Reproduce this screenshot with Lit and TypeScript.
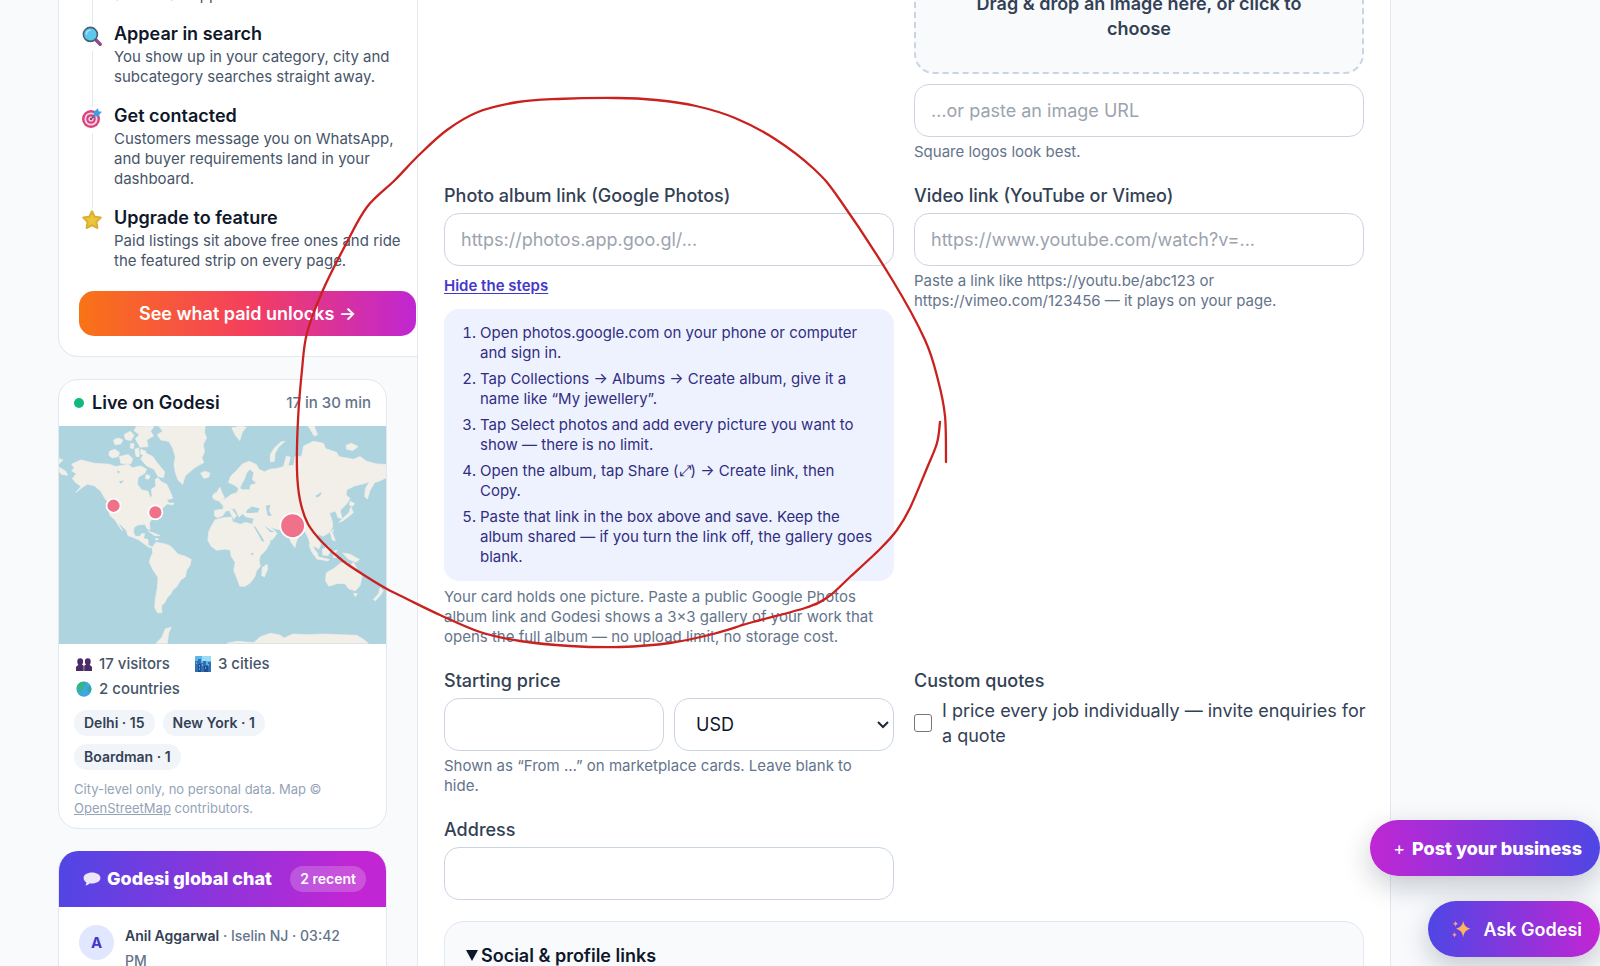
import { LitElement, html, css, svg } from "lit";
import { customElement } from "lit/decorators.js";

/* ---------- icons ---------- */

const searchIcon = html`<svg class="step-icon" viewBox="0 0 20 20" aria-hidden="true">
  <path d="M13 13l5.2 5.2" stroke="#8e4b8c" stroke-width="3.4" stroke-linecap="round" />
  <circle cx="8.4" cy="8.4" r="7" fill="#5cc8ee" stroke="#4a6076" stroke-width="1.6" />
  <path d="M4.4 8a4 4 0 0 1 3.6-3.8" stroke="#a5e4fb" stroke-width="1.4" fill="none" stroke-linecap="round" />
</svg>`;

const targetIcon = html`<svg class="step-icon" viewBox="0 0 20 20" aria-hidden="true">
  <circle cx="9" cy="11" r="9" fill="#d8437c" />
  <circle cx="9" cy="11" r="6.6" fill="#fbd3e2" />
  <circle cx="9" cy="11" r="4.8" fill="#d8437c" />
  <circle cx="9" cy="11" r="2.6" fill="#fbd3e2" />
  <circle cx="9" cy="11" r="1.2" fill="#8f3a78" />
  <path d="M9 11l6-6" stroke="#6b4f9c" stroke-width="1.2" />
  <path d="M11.600 8.400V4L16 .2l.6 3 3.200.6L16 8.400z" fill="#3f9fe0" />
</svg>`;

const starIcon = html`<svg class="step-icon" viewBox="0 0 20 20" aria-hidden="true">
  <path d="M10 1.200l2.700 5.500 6.100.9-4.400 4.300 1 6.100L10 15.100 4.600 18l1-6.100L1.200 7.600l6.100-.9z"
    fill="#ecc63a" stroke="#dcae33" stroke-width="2" stroke-linejoin="round" />
</svg>`;

const peopleIcon = html`<svg class="stat-icon" viewBox="0 0 16 16" aria-hidden="true">
  <g fill="#4b2a68">
    <path d="M1.300 5.500a2.900 3.300 0 0 1 5.800 0c0 1.500-.5 2.500-1.100 3.100l1.700 1.200V15H0v-3.400c0-1 1-1.700 2.500-2.500-.7-.8-1.200-2.100-1.200-3.600z" />
    <path d="M8.900 5.500a2.900 3.300 0 0 1 5.800 0c0 1.500-.5 2.800-1.200 3.600 1.500.8 2.500 1.500 2.500 2.500V15H8.200V9.800l1.800-1.200c-.6-.6-1.100-1.600-1.100-3.100z" />
  </g>
</svg>`;

const cityIcon = html`<svg class="stat-icon" viewBox="0 0 16 16" aria-hidden="true">
  <rect width="16" height="16" rx="1" fill="#58b8ea" />
  <rect x="7" width="9" height="5" fill="#9bdcf5" />
  <path d="M0 5h3V3h3v4h2V5h3v4h2V6h3v10H0z" fill="#2f6fb5" />
  <path d="M3 8h3v8H3zM9 10h4v6H9z" fill="#1f4f92" />
  <path d="M1 7h1M7 9h1M10 12h1M4 10h1M13 9h1M4 13h1" stroke="#bfe8fb" />
</svg>`;

const globeIcon = html`<svg class="stat-icon" viewBox="0 0 16 16" aria-hidden="true">
  <circle cx="8" cy="8" r="7.600" fill="#3fa7e8" />
  <path d="M3 2.300C6 .2 9 .5 10 2c.8 1.500-1 2.200-2 3.500S8 8 6.500 8.500 6 11 5 12 2 10 1 8s.4-4.500 2-5.700z" fill="#37b48a" />
  <path d="M11 6l3.500-1c1.200 2 1.200 5-1 7-1.500.4-1.300-2-2.200-3z" fill="#35a9a0" />
  <path d="M1 11c2 4 8 6 12.500 2.300C11 16 4 17 1 11z" fill="#2b6cc4" />
</svg>`;

const bubbleIcon = html`<svg class="bubble" viewBox="0 0 18 14" aria-hidden="true">
  <path d="M9 .6c4.700 0 8.400 2.300 8.400 5.500S13.700 11.600 9 11.600c-.9 0-1.700-.1-2.500-.2C5.500 12.600 4 13.400 2.400 13.400c.7-.8 1-1.800.9-2.900C1.700 9.400.6 7.900.6 6.100.6 2.900 4.300.6 9 .6z" fill="#ece4f8" />
</svg>`;

const sparkleIcon = html`<svg class="sparkle" viewBox="0 0 20 20" aria-hidden="true">
  <g fill="#fdb45c">
    <path d="M12.200 2c1 4.400 2.600 6.400 7.300 7.800-4.700 1.400-6.300 3.400-7.300 8.400-1-5-2.600-7-7.300-8.400C9.600 8.400 11.200 6.400 12.200 2z" />
    <path d="M4.500 1.800c.4 1.800 1 2.500 2.700 3-1.700.5-2.300 1.200-2.700 3-.4-1.800-1-2.500-2.700-3 1.700-.5 2.300-1.200 2.700-3z" fill="#f79a8d" />
    <path d="M3.500 13c.4 1.700.9 2.300 2.500 2.800-1.600.5-2.100 1.100-2.500 2.800-.4-1.700-.9-2.300-2.500-2.800 1.600-.5 2.100-1.100 2.500-2.800z" fill="#f79a8d" />
  </g>
</svg>`;

/* ---------- world map ---------- */

const land = [
  // North America
  "M92 285L120 272L160 282L205 285L225 292L262 285L275 296L300 290L318 300L312 312L292 325L290 345L302 362L322 366L328 386L334 380L332 360L345 352L344 330L352 326L362 338L378 345L392 375L396 388L378 392L384 402L400 402L396 408L380 404L370 414L352 425L345 440L330 455L326 462L328 482L320 480L312 466L292 468L280 474L278 490L284 502L298 502L302 494L312 494L308 508L322 512L322 528L334 534L326 536L312 526L296 514L276 505L262 500L256 484L238 466L232 462L246 486L240 480L222 452L208 440L200 415L202 400L190 385L180 366L160 350L140 345L128 352L104 370L120 352L104 340L94 328L106 314L92 305L100 296Z",
  // Arctic islands
  "M206 246L222 240L236 250L232 262L214 266L204 258Z", "M218 212L232 206L246 212L240 224L222 226Z",
  "M236 262L262 256L276 268L270 284L240 282Z", "M250 196L268 186L280 198L270 214L254 210Z",
  "M286 172L340 170L330 186L338 200L318 212L322 232L298 234L284 208L296 196L280 184Z",
  "M282 240L294 236L296 262L286 262Z", "M312 250L336 262L352 284L372 308L368 326L352 322L340 300L318 290L300 270Z",
  "M270 222L280 224L278 238L268 236Z", "M300 240L316 246L310 258L300 254Z", "M316 316L328 320L324 330L314 328Z",
  "M54 268L66 272L54 284Z", "M54 294L74 306L80 318L62 316L54 306Z",
  // Greenland, Iceland, Svalbard
  "M354 170L494 170L492 190L498 206L488 226L492 246L484 266L490 280L468 292L452 304L434 320L426 346L412 332L404 310L400 286L404 262L396 236L384 216L360 212L350 196L366 186Z",
  "M480 312L494 306L508 312L504 324L490 328Z",
  "M574 176L600 170L618 174L606 188L598 214L586 200Z", "M804 170L822 170L832 196L822 200Z",
  // Caribbean
  "M322 486L344 494L358 500L342 500ZM344 508L354 510L346 514Z",
  // South America
  "M334 536L346 520L370 524L388 530L404 546L412 556L434 562L452 572L448 590L438 604L434 624L420 634L408 654L396 664L390 676L380 686L372 702L362 712L364 732L350 732L342 716L344 690L350 656L352 626L336 602L326 580L330 564L336 552Z",
  "M374 780L392 776L384 792L380 824L346 824L364 806Z",
  // Africa
  "M524 452L548 446L574 444L576 458L600 466L616 460L636 466L650 492L664 516L686 514L690 520L676 544L660 560L656 574L660 592L648 606L644 622L630 642L614 652L598 652L590 630L580 604L584 580L572 562L570 544L554 540L528 544L512 532L502 514L504 490L512 472Z",
  "M666 596L680 586L682 600L672 624L664 620Z",
  // Europe and Asia
  "M522 424L548 420L548 410L536 396L556 388L572 376L590 370L596 356L606 362L628 362L630 348L650 342L636 332L640 310L628 300L618 312L612 330L604 344L596 362L588 352L578 346L564 340L570 322L588 304L606 284L626 276L648 286L656 300L672 308L688 300L710 298L730 292L738 260L750 264L744 290L760 288L764 262L784 262L790 230L820 216L850 222L856 238L890 250L896 262L940 270L960 262L980 276L1010 284L1038 286L1038 326L1018 336L1004 340L990 364L982 390L974 382L976 358L988 338L970 344L944 350L920 362L918 378L930 388L920 404L900 424L906 448L894 446L886 426L868 432L876 456L878 472L866 492L848 502L836 496L828 506L842 524L836 540L816 528L812 514L822 540L834 556L824 556L812 536L806 512L796 490L786 484L778 498L768 518L764 536L752 520L744 496L730 484L708 480L690 474L704 486L710 494L696 512L672 520L660 506L644 480L636 466L640 448L618 444L606 434L596 444L584 420L572 418L588 440L580 450L566 424L556 426L546 440L530 446L522 440Z",
  "M522 392L526 374L538 354L544 370L552 386L538 396ZM516 380L524 370L526 382L518 390Z",
  "M690 278L690 256L702 236L722 218L734 216L716 232L704 252L702 276Z",
  "M918 228L934 222L954 232L938 244L920 240Z",
  // Japan, Indonesia, islands
  "M930 396L944 404L936 412L928 408ZM932 414L940 430L926 442L908 456L896 460L914 442L926 432Z",
  "M806 526L822 544L836 564L868 572L864 576L830 570L814 548Z", "M846 542L864 530L872 544L864 560L848 558Z",
  "M880 546L892 544L884 554L890 566L880 566Z", "M868 480L876 490L886 516L876 512Z",
  "M908 552L930 556L958 572L948 580L924 570Z", "M876 484L880 480L878 490Z",
  // Australia, New Zealand
  "M858 612L882 598L902 582L922 580L928 592L940 580L952 602L966 624L960 650L946 666L926 660L914 644L892 644L866 652L856 636Z",
  "M940 674L952 674L946 684ZM1020 656L1030 666L1022 678L1006 696L1000 692L1016 674Z",
  // Antarctica
  "M560 824L590 818L640 822L660 804L690 794L716 798L732 808L758 796L800 798L850 796L900 798L950 800L970 812L985 824Z",
].map((d) => svg`<path d=${d} />`);

const water = [
  "M618 424L634 412L658 418L652 430L630 432L618 432Z",
  "M676 410L690 408L686 424L694 440L682 440Z",
  "M640 472L646 474L672 516L666 518ZM672 470L692 484L704 488L690 490Z",
  "M826 380L846 368L840 380L830 386Z", "M228 304L238 308L232 314ZM234 336L250 334L240 344Z", "M630 552L640 552L636 560Z",
].map((d) => svg`<path d=${d} />`);

const visitors = [
  { x: 218, y: 410, r: 21 },
  { x: 344, y: 430, r: 21 },
  { x: 757, y: 470, r: 37 },
].map((p) => svg`<circle cx=${p.x} cy=${p.y} r=${p.r} />`);

/* ---------- pen stroke ---------- */

const stroke: [number, number][] = [
  [940, 422], [937, 443], [927, 468], [910, 508], [897, 530], [880, 549], [850, 577], [828, 597], [805, 608], [753, 622],
  [713, 634], [670, 643], [620, 647], [570, 646], [520, 641], [480, 632], [440, 615], [407, 599], [387, 589], [367, 577],
  [343, 561], [323, 543], [308, 524], [300, 500], [297, 470], [298, 420], [302, 370], [307, 333], [323, 290], [346, 244],
  [367, 207], [395, 180], [419, 155], [447, 130], [478, 112], [518, 102], [557, 99], [617, 98], [656, 100], [696, 106],
  [735, 118], [775, 139], [814, 169], [840, 200], [893, 281], [925, 340], [938, 380], [945, 416], [946, 462],
];

/** Catmull-Rom spline through the points, written as cubic segments. */
function smooth(p: [number, number][]): string {
  let d = `M${p[0].join(" ")}`;
  for (let i = 0; i < p.length - 1; i++) {
    const a = p[Math.max(i - 1, 0)], b = p[i], c = p[i + 1], e = p[Math.min(i + 2, p.length - 1)];
    d += `C${b[0] + (c[0] - a[0]) / 6} ${b[1] + (c[1] - a[1]) / 6} ${c[0] - (e[0] - b[0]) / 6} ${c[1] - (e[1] - b[1]) / 6} ${c[0]} ${c[1]}`;
  }
  return d;
}

/* ---------- data ---------- */

const steps = [
  { icon: searchIcon, title: "Appear in search", text: "You show up in your category, city and subcategory searches straight away." },
  { icon: targetIcon, title: "Get contacted", text: "Customers message you on WhatsApp, and buyer requirements land in your dashboard." },
  { icon: starIcon, title: "Upgrade to feature", text: "Paid listings sit above free ones and ride the featured strip on every page." },
];

const albumSteps = [
  "Open photos.google.com on your phone or computer and sign in.",
  "Tap Collections → Albums → Create album, give it a name like “My jewellery”.",
  "Tap Select photos and add every picture you want to show — there is no limit.",
  "Open the album, tap Share (⤢) → Create link, then Copy.",
  "Paste that link in the box above and save. Keep the album shared — if you turn the link off, the gallery goes blank.",
];

const base = css`
  * { box-sizing: border-box; }
  h2, h3, p, ol, ul { margin: 0; padding: 0; font-weight: inherit; font-size: inherit; }
  svg { display: block; }
  button, input, select { font: inherit; }
`;

@customElement("side-column")
class SideColumn extends LitElement {
  static styles = [base, css`
    :host { display: flex; flex-direction: column; gap: 22px; }
    .card { background: #fff; border: 1px solid #e2e8f0; border-radius: 20px; overflow: hidden; flex: none; }
    .journey { margin-right: -50px; padding: 0 20px 20px; border-top: 0; border-radius: 0 0 20px 20px; }
    .steps { list-style: none; padding-left: 3px; }
    .step { display: grid; grid-template-columns: 20px 1fr; column-gap: 12px; }
    .rail { display: flex; flex-direction: column; align-items: center; padding-top: 5px; }
    .rail::after { content: ""; flex: 1; width: 1px; background: #e2e8f0; margin: 5px 0 -4px; }
    .step:last-child .rail::after { display: none; }
    .step-icon { width: 20px; height: 20px; fill: none; }
    .step-body { padding-bottom: 16px; font-size: 15px; line-height: 20px; color: #475569; }
    .step:last-child .step-body { padding-bottom: 0; }
    .step-title { font-size: 18px; line-height: 26px; font-weight: 600; color: #0f172a; }
    .unlock { display: block; margin-top: 20px; border-radius: 15px; padding: 10px; text-align: center; text-decoration: none;
      font-size: 18px; line-height: 25px; font-weight: 600; color: #fff; background: linear-gradient(90deg, #f97316, #f43f5e 50%, #c026d3); }

    .live-head { display: flex; align-items: center; gap: 8px; padding: 10px 15px 11px; line-height: 25px; }
    .dot { width: 10px; height: 10px; border-radius: 50%; background: #10b981; }
    .live-title { flex: 1; font-size: 18px; font-weight: 600; color: #0f172a; }
    .live-count { font-size: 15px; font-weight: 500; color: #64748b; }
    .map { width: 100%; background: #aed4e0; }
    .land { fill: #f2efe9; stroke: #f2efe9; stroke-width: 2; stroke-linejoin: round; }
    .water { fill: #aed4e0; }
    .pins { fill: #f0728a; stroke: #fff; stroke-width: 5; }
    .live-body { padding: 10px 15px; }
    .stats { list-style: none; display: flex; flex-wrap: wrap; gap: 5px 23px; font-size: 15px; line-height: 20px; font-weight: 500; color: #475569; }
    .stat { display: flex; align-items: center; gap: 7px; padding-left: 2px; }
    .stat-icon { width: 16px; height: 16px; }
    .chips { list-style: none; display: flex; flex-wrap: wrap; gap: 8px; margin-top: 11px; }
    .chip { border-radius: 13px; padding: 3px 10px; background: #f1f5f9; font-size: 14px; line-height: 20px; font-weight: 600; color: #334155; }
    .note { margin-top: 10px; font-size: 13px; line-height: 19px; color: #94a3b8; }
    .note a { color: inherit; }

    .chat { border-top: 0; }
    .chat-head { display: flex; align-items: center; gap: 6px; margin: 0 -1px; padding: 15px 21px 15px 25px; color: #fff;
      background: linear-gradient(100deg, #4f46e5, #c026d3 88%); }
    .bubble { width: 18px; height: 14px; }
    .chat-title { flex: 1; font-size: 18px; line-height: 26px; font-weight: 800; white-space: nowrap; }
    .badge { border-radius: 13px; padding: 3px 10px; background: rgb(255 255 255 / 20%); font-size: 14px; line-height: 20px; font-weight: 600; }
    .message { display: flex; align-items: flex-start; gap: 11px; padding: 16px 32px 16px 20px; font-size: 14px; line-height: 25px; font-weight: 500; color: #64748b; }
    .avatar { flex: none; width: 35px; height: 35px; margin-top: 2px; border-radius: 50%; background: #e0e7ff; color: #4338ca;
      font-weight: 700; font-size: 15px; line-height: 35px; text-align: center; }
    .author { font-weight: 600; color: #334155; }
  `];

  render() {
    return html`
      <section class="card journey">
        <ol class="steps">
          <li class="step">
            <span class="rail"></span>
            <div class="step-body">
              <h3 class="step-title">Get your page</h3>
              <p>Share it anywhere, with a call<br />and WhatsApp button.</p>
            </div>
          </li>
          ${steps.map((s) => html`<li class="step">
            <span class="rail">${s.icon}</span>
            <div class="step-body"><h3 class="step-title">${s.title}</h3><p>${s.text}</p></div>
          </li>`)}
        </ol>
        <a class="unlock" href="#paid">See what paid unlocks →</a>
      </section>

      <section class="card">
        <header class="live-head">
          <span class="dot"></span>
          <h2 class="live-title">Live on Godesi</h2>
          <span class="live-count">17 in 30 min</span>
        </header>
        <svg class="map" viewBox="54 170 984 655" role="img" aria-label="Visitor map">
          <g class="land">${land}</g>
          <g class="water">${water}</g>
          <g class="pins">${visitors}</g>
        </svg>
        <div class="live-body">
          <ul class="stats">
            <li class="stat">${peopleIcon}17 visitors</li>
            <li class="stat">${cityIcon}3 cities</li>
            <li class="stat">${globeIcon}2 countries</li>
          </ul>
          <ul class="chips">
            <li class="chip">Delhi · 15</li>
            <li class="chip">New York · 1</li>
            <li class="chip">Boardman · 1</li>
          </ul>
          <p class="note">City-level only, no personal data. Map © <a href="#osm">OpenStreetMap</a> contributors.</p>
        </div>
      </section>

      <section class="card chat">
        <header class="chat-head">
          ${bubbleIcon}
          <h2 class="chat-title">Godesi global chat</h2>
          <span class="badge">2 recent</span>
        </header>
        <div class="message">
          <span class="avatar">A</span>
          <p><span class="author">Anil Aggarwal</span> · Iselin NJ · 03:42 PM</p>
        </div>
      </section>
    `;
  }
}

@customElement("listing-form")
class ListingForm extends LitElement {
  static styles = [base, css`
    :host { display: block; }
    .form { display: grid; grid-template-columns: 1fr 1fr; gap: 21px 20px; font-size: 18px; line-height: 25px; color: #334155; }
    .field { display: flex; flex-direction: column; gap: 5px; min-width: 0; }
    .right { grid-column: 2; }
    .label { font-weight: 500; }
    .input { width: 100%; min-width: 0; height: 53px; padding: 0 16px; border: 1px solid #cbd5e1; border-radius: 15px; background: #fff; color: #0f172a; }
    .input::placeholder { color: #9ca3af; opacity: 1; }
    .help { padding-right: 8px; font-size: 15px; line-height: 20px; color: #64748b; }
    .drop { display: block; width: 100%; padding: 32px 40px 31px; margin-bottom: 5px; border: 2px dashed #cbd5e1; border-radius: 20px;
      background: #f8fafc; color: #334155; font-weight: 600; line-height: 25px; text-align: center; }
    .toggle { align-self: flex-start; margin: 5px 0; padding: 0; border: 0; background: none; font-size: 15px; line-height: 20px; font-weight: 600;
      color: #4338ca; text-decoration: underline; text-underline-offset: 2px; }
    .guide { margin: 3px 0 1px; padding: 14px 16px 14px 36px; border-radius: 15px; background: #eef2ff; color: #312e81;
      display: flex; flex-direction: column; gap: 6px; font-size: 15px; line-height: 20px; }
    .price { display: grid; grid-template-columns: 1fr 1fr; gap: 10px; }
    .select { display: grid; align-items: center; }
    .select > * { grid-area: 1 / 1; }
    .select .input { appearance: none; padding: 0 22px 0 21px; }
    .chevron { justify-self: end; width: 12px; height: 8px; margin-right: 5px; fill: none; stroke: #1e293b; stroke-width: 2; pointer-events: none; }
    .check { display: flex; align-items: center; gap: 10px; margin-right: -4px; }
    .box { flex: none; width: 18px; height: 18px; margin: 0; appearance: none; border: 1px solid #767676; border-radius: 3px; background: #fff; }
    .social { grid-column: 1 / -1; min-height: 100px; padding: 21px; border: 1px solid #e2e8f0; border-radius: 20px; background: #f8fafc; }
    .summary { display: flex; align-items: center; gap: 3px; list-style: none; font-weight: 600; color: #0f172a; }
    .marker { width: 12px; height: 11px; fill: #0f172a; }
  `];

  render() {
    return html`
      <form class="form">
        <div class="field right">
          <button class="drop" type="button">Drag &amp; drop an image here, or click to choose</button>
          <input class="input" type="url" aria-label="Image URL" placeholder="…or paste an image URL" />
          <p class="help">Square logos look best.</p>
        </div>

        <div class="field">
          <label class="label" for="album">Photo album link (Google Photos)</label>
          <input class="input" id="album" type="url" placeholder="https://photos.app.goo.gl/..." />
          <button class="toggle" type="button">Hide the steps</button>
          <ol class="guide">${albumSteps.map((s) => html`<li>${s}</li>`)}</ol>
          <p class="help">Your card holds one picture. Paste a public Google Photos album link and Godesi shows a 3×3 gallery of your work that opens the full album — no upload limit, no storage cost.</p>
        </div>
        <div class="field">
          <label class="label" for="video">Video link (YouTube or Vimeo)</label>
          <input class="input" id="video" type="url" placeholder="https://www.youtube.com/watch?v=..." />
          <p class="help">Paste a link like https://youtu.be/abc123 or https://vimeo.com/123456 — it plays on your page.</p>
        </div>

        <div class="field">
          <label class="label" for="price">Starting price</label>
          <div class="price">
            <input class="input" id="price" inputmode="decimal" />
            <div class="select">
              <select class="input" aria-label="Currency"><option>USD</option></select>
              <svg class="chevron" viewBox="0 0 12 8"><path d="M1 1l5 5 5-5" /></svg>
            </div>
          </div>
          <p class="help">Shown as “From …” on marketplace cards. Leave blank to hide.</p>
        </div>
        <div class="field">
          <span class="label">Custom quotes</span>
          <label class="check">
            <input class="box" type="checkbox" />
            <span>I price every job individually — invite enquiries for a quote</span>
          </label>
        </div>

        <div class="field">
          <label class="label" for="address">Address</label>
          <input class="input" id="address" />
        </div>

        <details class="social" open>
          <summary class="summary">
            <svg class="marker" viewBox="0 0 12 11"><path d="M0 0h12L6 11z" /></svg>Social &amp; profile links
          </summary>
        </details>
      </form>
    `;
  }
}

@customElement("app-root")
class AppRoot extends LitElement {
  static styles = [base, css`
    :host { display: block; position: relative; height: 100vh; overflow: hidden; background: #f8fafc;
      font-family: Inter, "Liberation Sans", sans-serif; }
    .page { display: grid; grid-template-columns: 417px 1fr; padding-right: 209px; min-height: 100%; }
    .side { padding: 0 30px 0 58px; margin-top: -61px; }
    .main { position: relative; background: #fff; border: solid #e2e8f0; border-width: 0 1px; padding: 0 26px; }
    .form { display: block; margin-top: -43px; }
    .ink { position: absolute; inset: 0; width: 100%; height: 100%; fill: none; stroke: #c9211e; stroke-width: 2.300; stroke-linecap: round; pointer-events: none; }
    .floating { position: absolute; right: 0; bottom: 9px; display: flex; flex-direction: column; align-items: flex-end; gap: 25px; }
    .fab { display: flex; align-items: center; height: 56px; border: 0; border-radius: 28px; padding: 0 18px 0 23px; color: #fff; font-size: 18px;
      box-shadow: 0 10px 28px rgb(15 23 42 / 22%); }
    .post { gap: 7px; font-weight: 800; background: linear-gradient(90deg, #c026d3, #4f46e5); }
    .plus { font-weight: 400; }
    .ask { gap: 12px; font-weight: 600; background: linear-gradient(90deg, #4f46e5, #c026d3); }
    .sparkle { width: 20px; height: 20px; }
  `];

  render() {
    return html`
      <div class="page">
        <aside class="side"><side-column></side-column></aside>
        <main class="main"><listing-form class="form"></listing-form></main>
      </div>
      <svg class="ink" viewBox="0 0 1600 966" aria-hidden="true"><path d=${smooth(stroke)} /></svg>
      <div class="floating">
        <button class="fab post" type="button"><span class="plus">+</span>Post your business</button>
        <button class="fab ask" type="button">${sparkleIcon}Ask Godesi</button>
      </div>
    `;
  }
}
